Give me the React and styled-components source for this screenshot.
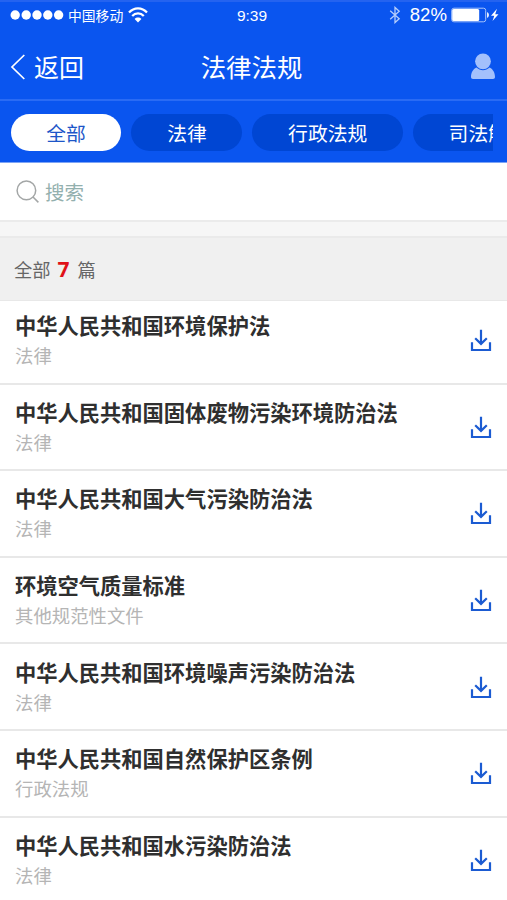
import React, { useState } from 'react'
import styled, { createGlobalStyle } from 'styled-components'

const tabs = ['全部', '法律', '行政法规', '司法解释']

const laws = [
  { id: 1, title: '中华人民共和国环境保护法', type: '法律' },
  { id: 2, title: '中华人民共和国固体废物污染环境防治法', type: '法律' },
  { id: 3, title: '中华人民共和国大气污染防治法', type: '法律' },
  { id: 4, title: '环境空气质量标准', type: '其他规范性文件' },
  { id: 5, title: '中华人民共和国环境噪声污染防治法', type: '法律' },
  { id: 6, title: '中华人民共和国自然保护区条例', type: '行政法规' },
  { id: 7, title: '中华人民共和国水污染防治法', type: '法律' },
]

function StatusBar() {
  return (
    <Status>
      <div className="side">
        <svg width="54" height="10" viewBox="0 0 54 10" fill="#fff">
          {[5.2, 16.2, 27, 37.8, 48.6].map((cx) => (
            <circle key={cx} cx={cx} cy="5" r="4.7" />
          ))}
        </svg>
        <span className="carrier">中国移动</span>
        <svg className="wifi" width="20" height="16" viewBox="0 0 20 16" fill="none" stroke="#fff" strokeWidth="2.2">
          <path d="M1 5.600C6-.1 14-.1 19 5.600" />
          <path d="M4.200 9c3.200-3.600 8.400-3.600 11.600 0" />
          <path d="M10 15.600l-3.400-3.700c1.900-1.900 4.900-1.900 6.800 0z" fill="#fff" stroke="none" />
        </svg>
      </div>
      <span className="time">9:39</span>
      <div className="side right">
        <svg width="12" height="18" viewBox="0 0 12 18" fill="none" stroke="#b5cdfb" strokeWidth="1.3">
          <path d="M1.200 4.800l9 8L6 16.600V1.400l4.200 3.800-9 8" />
        </svg>
        <span className="percent">82%</span>
        <svg width="49" height="16" viewBox="0 0 49 16">
          <rect x=".7" y="1.2" width="34" height="13.6" rx="2.2" fill="none" stroke="#a9c5fb" />
          <rect x="1.2" y="2" width="27" height="12" rx="1.5" fill="#fff" />
          <path d="M36 5.200c2.600.4 2.600 5.200 0 5.600z" fill="#e6eefe" />
          <path d="M46 1.800l-6 7h3.300L41.500 14l6-6.800h-3.300z" fill="#fff" />
        </svg>
      </div>
    </Status>
  )
}

function DownloadIcon() {
  return (
    <svg width="22" height="23" viewBox="0 0 22 23" fill="none" stroke="#1b5bd2" strokeWidth="2.2">
      <path d="M11 .8v14M5.200 9.300l5.800 5.600 5.800-5.600" />
      <path d="M2 13.200V21h18v-7.800" />
    </svg>
  )
}

export default function App() {
  const [active, setActive] = useState('全部')

  return (
    <Page>
      <GlobalStyle />
      <Header>
        <StatusBar />
        <NavBar>
          <Back>
            <svg width="16" height="26" viewBox="0 0 16 26" fill="none" stroke="#fff" strokeWidth="1.7">
              <path d="M14.300 1L2 13l12.300 12" />
            </svg>
            <span>返回</span>
          </Back>
          <h1>法律法规</h1>
          <User>
            <svg width="26" height="27" viewBox="0 0 26 27" fill="#a3c0fc">
              <circle cx="13" cy="8.3" r="7.9" />
              <path d="M6.300 14.600c4 3.400 9.400 3.400 13.400 0 3.300 1.700 5.300 5.400 5.300 9.400 0 1.300-.7 2-2 2H3c-1.300 0-2-.7-2-2 0-4 2-7.700 5.300-9.400z" />
            </svg>
          </User>
        </NavBar>
        <Tabs>
          {tabs.map((tab) => (
            <Tab key={tab} $active={tab === active} onClick={() => setActive(tab)}>
              {tab}
            </Tab>
          ))}
        </Tabs>
      </Header>
      <Search>
        <svg width="23" height="23" viewBox="0 0 23 23" fill="none" stroke="#a3a6a6" strokeWidth="1.5">
          <circle cx="10.4" cy="10.4" r="9.3" />
          <path d="M17 17l5.400 5.400" />
        </svg>
        <span>搜索</span>
      </Search>
      <Spacer />
      <Count>
        全部<b>{laws.length}</b>篇
      </Count>
      <List>
        {laws.map((law) => (
          <Row key={law.id}>
            <div>
              <h2>{law.title}</h2>
              <p>{law.type}</p>
            </div>
            <DownloadIcon />
          </Row>
        ))}
      </List>
    </Page>
  )
}

const GlobalStyle = createGlobalStyle`
  *{
    box-sizing: border-box;
    margin: 0;
    padding: 0;
  }
  body{
    background: #fff;
    font-family: "Noto Sans CJK SC", "Noto Sans", sans-serif;
  }
  svg{
    display: block;
    flex-shrink: 0;
  }
`;

const Page = styled.div`
  width: 507px;
  height: 900px;
  overflow: hidden;
`;

const Header = styled.header`
  height: 163px;
  background: #0a55ef;
  border-top: 2px solid #2463f0;
  border-bottom: 1px solid #7da4f5;
  color: #fff;
`;

const Status = styled.div`
  display: grid;
  grid-template-columns: 1fr auto 1fr;
  align-items: center;
  height: 27px;
  padding: 0 7px 0 10px;
  .side{
    display: flex;
    align-items: center;
    height: 26px;
    padding-bottom: 1px;
  }
  .right{
    justify-content: flex-end;
  }
  .carrier{
    margin-left: 4px;
    font-size: 13.8px;
    line-height: 20px;
  }
  .wifi{
    margin-left: 5px;
  }
  .time{
    margin-right: 6px;
    font-family: "Liberation Sans", sans-serif;
    font-size: 15.5px;
    line-height: 27px;
  }
  .percent{
    margin: 0 4px 0 9px;
    font-family: "Liberation Sans", sans-serif;
    font-size: 18.6px;
    line-height: 26px;
  }
`;

const NavBar = styled.nav`
  display: grid;
  grid-template-columns: 1fr auto 1fr;
  align-items: center;
  height: 72px;
  padding: 5px 11px 0 10px;
  border-bottom: 2px solid #2a6bf4;
  h1{
    margin: 0 3px 2px 0;
    font-size: 25.4px;
    font-weight: 400;
    line-height: 36px;
  }
`;

const Back = styled.div`
  display: flex;
  align-items: center;
  gap: 8px;
  font-size: 25px;
  line-height: 36px;
  span{
    margin-bottom: 2px;
  }
`;

const User = styled.div`
  display: flex;
  justify-content: flex-end;
`;

const Tabs = styled.div`
  display: flex;
  gap: 10px;
  margin: 13px 14px 0 10.5px;
  overflow: hidden;
`;

const Tab = styled.button`
  flex-shrink: 0;
  height: 37px;
  padding: 0 35.7px;
  border: none;
  border-radius: 19px;
  background: ${({ $active }) => ($active ? '#fff' : '#0046d3')};
  color: ${({ $active }) => ($active ? '#1d56c8' : '#fff')};
  font-family: inherit;
  font-size: 19.8px;
  line-height: 37px;
`;

const Search = styled.div`
  display: flex;
  align-items: center;
  height: 59px;
  padding: 0 16px;
  gap: 6px;
  border-bottom: 2px solid #ebebeb;
  color: #93b0ae;
  font-size: 19.5px;
`;

const Spacer = styled.div`
  height: 14px;
  background: #f6f6f6;
`;

const Count = styled.div`
  display: flex;
  align-items: center;
  height: 65px;
  padding: 0 14px 1px;
  background: #f0f0f0;
  border-top: 2px solid #eaeaea;
  border-bottom: 1px solid #e8e8e8;
  color: #666;
  font-size: 18.3px;
  b{
    margin: 0 8px 0 7px;
    color: #e01218;
    font-size: 21px;
    font-family: "Noto Sans", sans-serif;
  }
`;

const List = styled.ul`
  list-style: none;
`;

const Row = styled.li`
  display: flex;
  align-items: center;
  justify-content: space-between;
  height: 86.6px;
  padding: 1px 15px 0 15px;
  border-bottom: 2px solid #e8e8e8;
  &:first-child{
    height: 83.6px;
    padding-top: 0;
    padding-bottom: 2px;
  }
  h2{
    color: #2f2f2f;
    font-size: 21.27px;
    font-weight: 700;
    line-height: 29px;
  }
  p{
    padding-top: 1px;
    color: #b5b5b5;
    font-size: 18.4px;
    line-height: 31px;
  }
`;
